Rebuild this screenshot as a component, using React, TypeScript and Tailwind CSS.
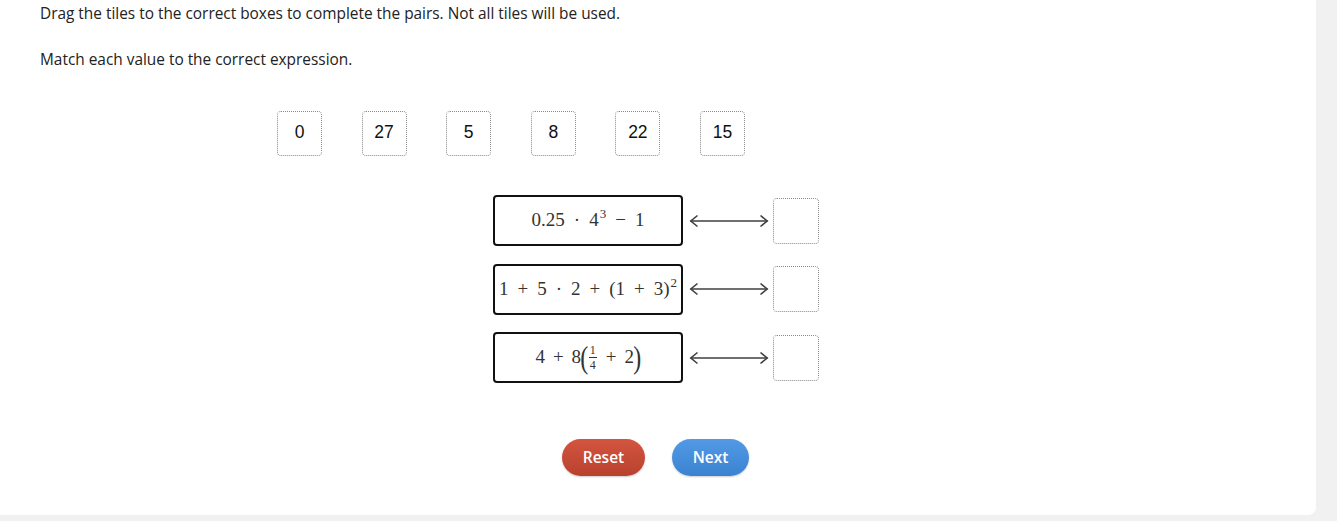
import React from "react";

const tiles = ["0", "27", "5", "8", "22", "15"];

function Arrow() {
  return (
    <svg width="80" height="14" viewBox="0 0 80 14" className="block">
      <line x1="1.5" y1="7" x2="78.5" y2="7" stroke="#3f3f3f" strokeWidth="1.6" />
      <polyline points="8.5,1.5 1.8,7 8.5,12.5" fill="none" stroke="#3f3f3f" strokeWidth="1.6" />
      <polyline points="71.5,1.5 78.2,7 71.5,12.5" fill="none" stroke="#3f3f3f" strokeWidth="1.6" />
    </svg>
  );
}

function Op({ children }: { children: React.ReactNode }) {
  return <span className="mx-[9px]">{children}</span>;
}

function Sup({ children }: { children: React.ReactNode }) {
  return (
    <span className="inline-block text-[13px] leading-[13px] relative -top-[8px] ml-[1px]">{children}</span>
  );
}

function Expr1() {
  return (
    <span className="flex items-baseline">
      <span>0.25</span>
      <Op>·</Op>
      <span>4</span>
      <Sup>3</Sup>
      <Op>−</Op>
      <span>1</span>
    </span>
  );
}

function Expr2() {
  return (
    <span className="flex items-baseline">
      <span>1</span>
      <Op>+</Op>
      <span>5</span>
      <Op>·</Op>
      <span>2</span>
      <Op>+</Op>
      <span>(1</span>
      <Op>+</Op>
      <span>3)</span>
      <Sup>2</Sup>
    </span>
  );
}

function Expr3() {
  return (
    <span className="flex items-center">
      <span>4</span>
      <span className="mx-[8px]">+</span>
      <span>8</span>
      <span className="text-[32px] leading-[32px] scale-x-75 -mx-[2px] -translate-y-[1px]">(</span>
      <span className="inline-flex flex-col items-center text-[12px] leading-[12px] mx-[1px]">
        <span>1</span>
        <span className="w-[8px] h-[1px] bg-[#333] my-[1px]"></span>
        <span>4</span>
      </span>
      <span className="mx-[8px]">+</span>
      <span>2</span>
      <span className="text-[32px] leading-[32px] scale-x-75 -mx-[2px] -translate-y-[1px]">)</span>
    </span>
  );
}

export default function App() {
  const exprs = [<Expr1 key="1" />, <Expr2 key="2" />, <Expr3 key="3" />];
  return (
    <div className="w-[1337px] h-[521px] bg-[#f1f1f1] overflow-hidden">
      <div className="w-[1316px] h-[515px] bg-white rounded-br-[8px] pl-[40px] pt-[4px] font-['Open_Sans',sans-serif] text-[#222]">
        <p className="text-[15.4px] leading-[20px]">
          Drag the tiles to the correct boxes to complete the pairs. Not all tiles will be used.
        </p>
        <p className="mt-[26px] text-[15.4px] leading-[20px]">Match each value to the correct expression.</p>

        <div className="mt-[41px] ml-[237px] flex gap-[39.6px]">
          {tiles.map((t) => (
            <div
              key={t}
              className="w-[45px] h-[45px] border border-dotted border-[#8a8a8a] rounded-[4px] flex items-center justify-center pb-[3px] font-['Liberation_Sans',Arial,sans-serif] text-[17.5px] text-[#111]"
            >
              {t}
            </div>
          ))}
        </div>

        <div className="mt-[39px] ml-[453px] flex flex-col gap-[17.5px]">
          {exprs.map((e, i) => (
            <div key={i} className="flex items-center">
              <div className="w-[190px] h-[51px] border-2 border-[#111] rounded-[4px] flex items-center justify-center font-['Liberation_Serif','Times_New_Roman',serif] text-[19px] text-[#333]">
                {e}
              </div>
              <div className="ml-[6px]">
                <Arrow />
              </div>
              <div className="ml-[4px] w-[46px] h-[46px] border border-dotted border-[#8a8a8a] rounded-[4px]" />
            </div>
          ))}
        </div>

        <div className="mt-[56px] ml-[522px] flex gap-[27px]">
          <button className="w-[83px] h-[37px] rounded-full bg-gradient-to-b from-[#d3553f] to-[#b8412f] text-white text-[15.5px] font-semibold shadow-[0_1px_2px_rgba(0,0,0,0.2)]">
            Reset
          </button>
          <button className="w-[77px] h-[37px] rounded-full bg-gradient-to-b from-[#529ae6] to-[#3b82d0] text-white text-[15.5px] font-semibold shadow-[0_1px_2px_rgba(0,0,0,0.2)]">
            Next
          </button>
        </div>
      </div>
    </div>
  );
}
